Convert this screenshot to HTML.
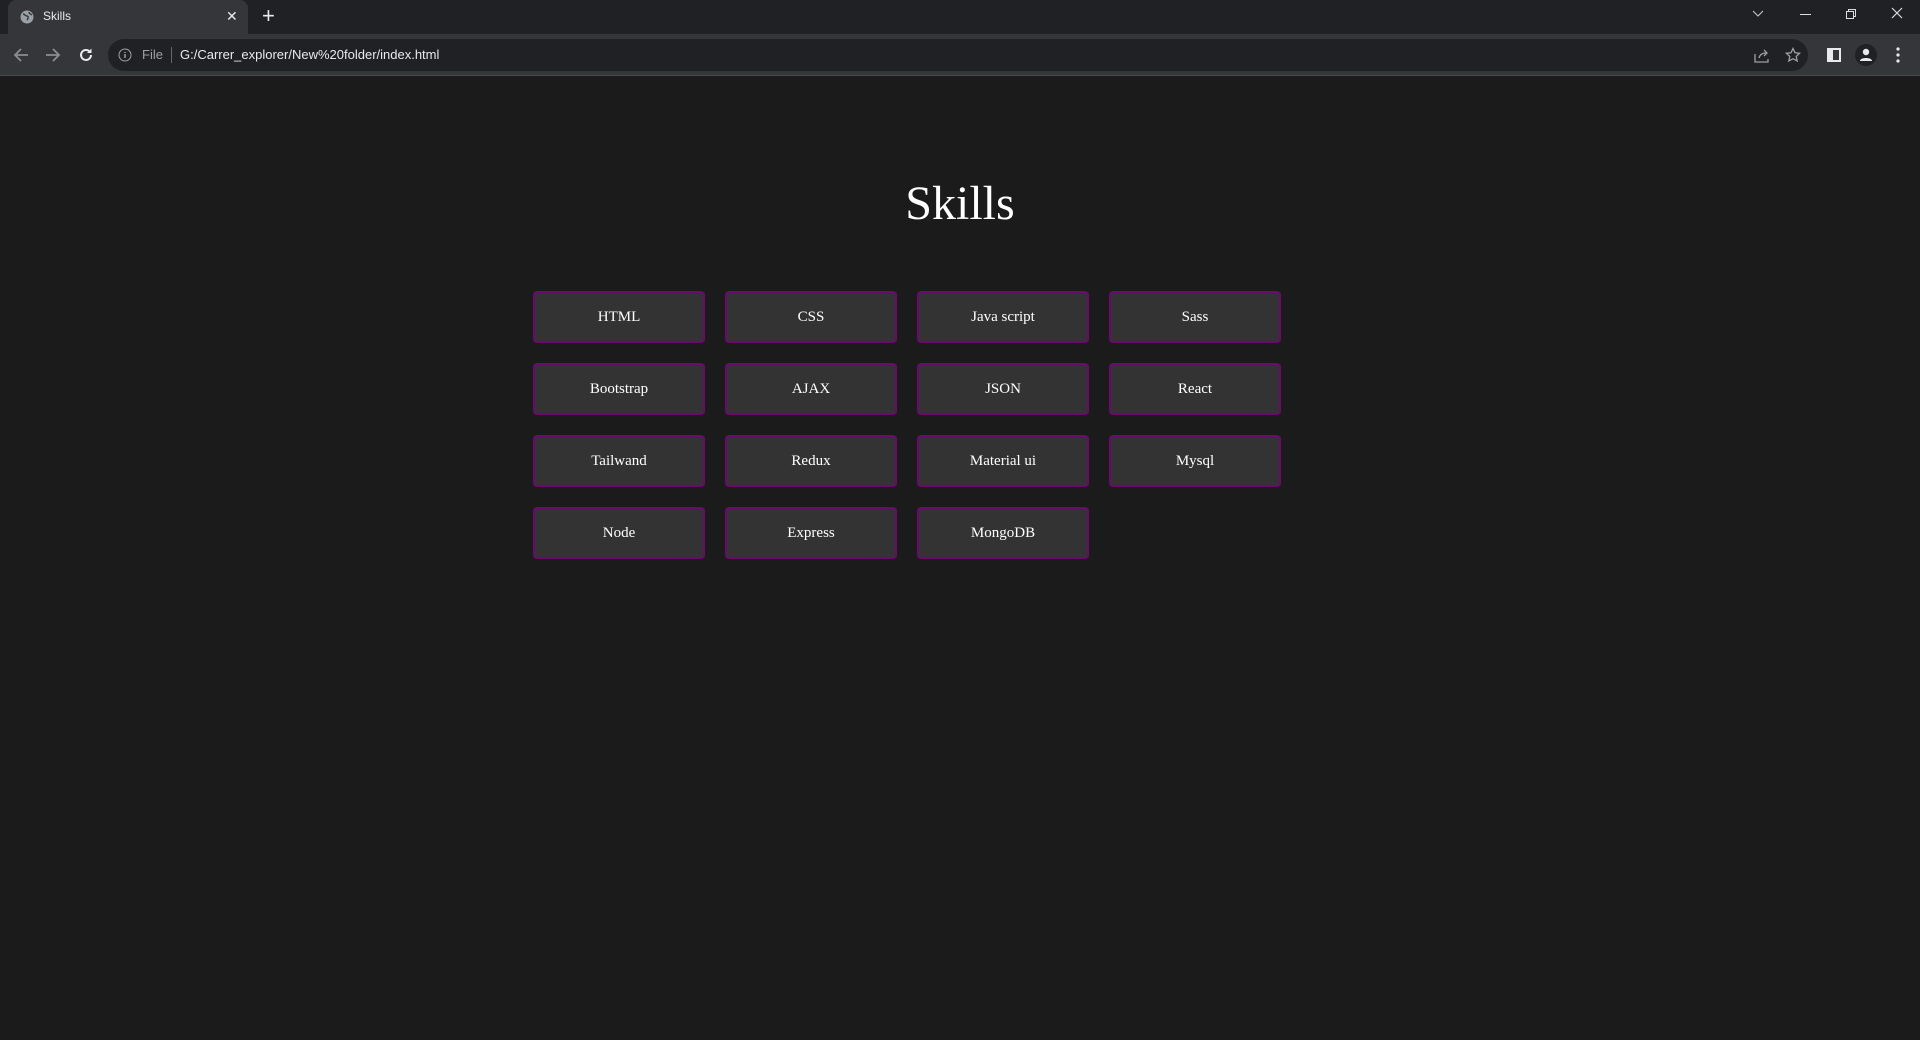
<!DOCTYPE html>
<html><head><meta charset="utf-8"><style>
*{margin:0;padding:0;box-sizing:border-box}
body{width:1920px;height:1040px;background:#1b1b1b;overflow:hidden;font-family:"Liberation Serif",serif;position:relative}
.tabbar{position:absolute;left:0;top:0;width:1920px;height:34px;background:#202124}
.tab{position:absolute;left:8px;top:0;width:240px;height:34px;background:#35363a;border-radius:8px 8px 0 0;color:#e8eaed;font:12px "Liberation Sans",sans-serif}
.toolbar{position:absolute;left:0;top:34px;width:1920px;height:42px;background:#35363a;border-bottom:1px solid #4a4a4a}
.omni{position:absolute;left:108px;top:5px;width:1700px;height:32px;border-radius:16px;background:#202124}
.ui{position:absolute;font-family:"Liberation Sans",sans-serif}
h1{position:absolute;left:0;width:1920px;top:176px;text-align:center;color:#fff;font-weight:normal;font-size:48px;line-height:56px}
.b{position:absolute;width:172px;height:52px;background:#333;border:2px solid #6a0a6e;border-radius:4px;color:#fff;font-size:15px;display:flex;align-items:center;justify-content:center}
</style></head><body>
<div class="tabbar">
 <div class="tab">
  <svg class="ui" style="left:12px;top:10px" width="14" height="14" viewBox="0 0 14 14"><circle cx="7" cy="7" r="6.5" fill="#9aa0a6"/><path d="M3 4c2 0 2 2 4 2s1 3 0 4M9 2c0 2 2 2 3 3" stroke="#35363a" stroke-width="1.4" fill="none"/></svg>
  <span class="ui" style="left:35px;top:9px">Skills</span>
  <span class="ui" style="left:218px;top:8px;font-size:14px">✕</span>
 </div>
 <span class="ui" style="left:262px;top:3px;color:#e8eaed;font-size:22px">+</span>
 <svg class="ui" style="left:1752px;top:10px" width="12" height="8"><path d="M1 1l5 5 5-5" stroke="#ccc" fill="none"/></svg>
 <div class="ui" style="left:1800px;top:14px;width:11px;height:1px;background:#ddd"></div>
 <svg class="ui" style="left:1845px;top:8px" width="12" height="12"><path d="M1.5 3.5h7v7h-7zM3.5 3.5V1.5h7v7h-2" stroke="#ddd" fill="none"/></svg>
 <svg class="ui" style="left:1891px;top:7px" width="12" height="12"><path d="M1 1l10 10M11 1L1 11" stroke="#ddd" stroke-width="1.2"/></svg>
</div>
<div class="toolbar">
 <svg class="ui" style="left:13px;top:13px" width="16" height="16"><path d="M15 8H2M8 2L2 8l6 6" stroke="#8a8d91" stroke-width="1.8" fill="none"/></svg>
 <svg class="ui" style="left:45px;top:13px" width="16" height="16"><path d="M1 8h13M8 2l6 6-6 6" stroke="#8a8d91" stroke-width="1.8" fill="none"/></svg>
 <svg class="ui" style="left:78px;top:13px" width="16" height="16"><path d="M13 8a5 5 0 1 1-1.5-3.6" stroke="#e8eaed" stroke-width="2" fill="none"/><path d="M13.5 1.5v4.5H9z" fill="#e8eaed"/></svg>
 <div class="omni">
  <svg class="ui" style="left:10px;top:9px" width="14" height="14"><circle cx="7" cy="7" r="6" stroke="#9aa0a6" fill="none"/><path d="M7 6v4M7 4v1" stroke="#9aa0a6" stroke-width="1.5"/></svg>
  <span class="ui" style="left:34px;top:8px;color:#9aa0a6;font-size:13px">File</span>
  <div class="ui" style="left:63px;top:8px;width:1px;height:16px;background:#666"></div>
  <span class="ui" style="left:72px;top:8px;color:#e8eaed;font-size:13px">G:/Carrer_explorer/New%20folder/index.html</span>
  <svg class="ui" style="left:1646px;top:9px" width="16" height="15"><path d="M1 6v8h13v-3M5 10c1-4 4-5 7-5M10 2l3 3-3 3" stroke="#9aa0a6" stroke-width="1.3" fill="none"/></svg>
  <svg class="ui" style="left:1677px;top:8px" width="16" height="16"><path d="M8 1.5l2 4.3 4.6.5-3.4 3.1 1 4.6L8 11.7 3.8 14l1-4.6L1.4 6.3l4.6-.5z" stroke="#9aa0a6" stroke-width="1.3" fill="none"/></svg>
 </div>
 <div class="ui" style="left:1827px;top:14px;width:14px;height:14px;background:#e8eaed;border-left:0"><div style="margin:2px 2px 2px 6px;width:6px;height:10px;background:#35363a"></div></div>
 <div class="ui" style="left:1855px;top:10px;width:22px;height:22px;border-radius:50%;background:#202124"><svg width="22" height="22"><circle cx="11" cy="8" r="3.2" fill="#e8eaed"/><path d="M5 17c0-4 12-4 12 0z" fill="#e8eaed"/></svg></div>
 <svg class="ui" style="left:1896px;top:13px" width="4" height="16"><circle cx="2" cy="2" r="1.6" fill="#e8eaed"/><circle cx="2" cy="8" r="1.6" fill="#e8eaed"/><circle cx="2" cy="14" r="1.6" fill="#e8eaed"/></svg>
</div>
<h1>Skills</h1>
<div class="b" style="left:533px;top:291px">HTML</div>
<div class="b" style="left:725px;top:291px">CSS</div>
<div class="b" style="left:917px;top:291px">Java script</div>
<div class="b" style="left:1109px;top:291px">Sass</div>
<div class="b" style="left:533px;top:363px">Bootstrap</div>
<div class="b" style="left:725px;top:363px">AJAX</div>
<div class="b" style="left:917px;top:363px">JSON</div>
<div class="b" style="left:1109px;top:363px">React</div>
<div class="b" style="left:533px;top:435px">Tailwand</div>
<div class="b" style="left:725px;top:435px">Redux</div>
<div class="b" style="left:917px;top:435px">Material ui</div>
<div class="b" style="left:1109px;top:435px">Mysql</div>
<div class="b" style="left:533px;top:507px">Node</div>
<div class="b" style="left:725px;top:507px">Express</div>
<div class="b" style="left:917px;top:507px">MongoDB</div>
</body></html>
